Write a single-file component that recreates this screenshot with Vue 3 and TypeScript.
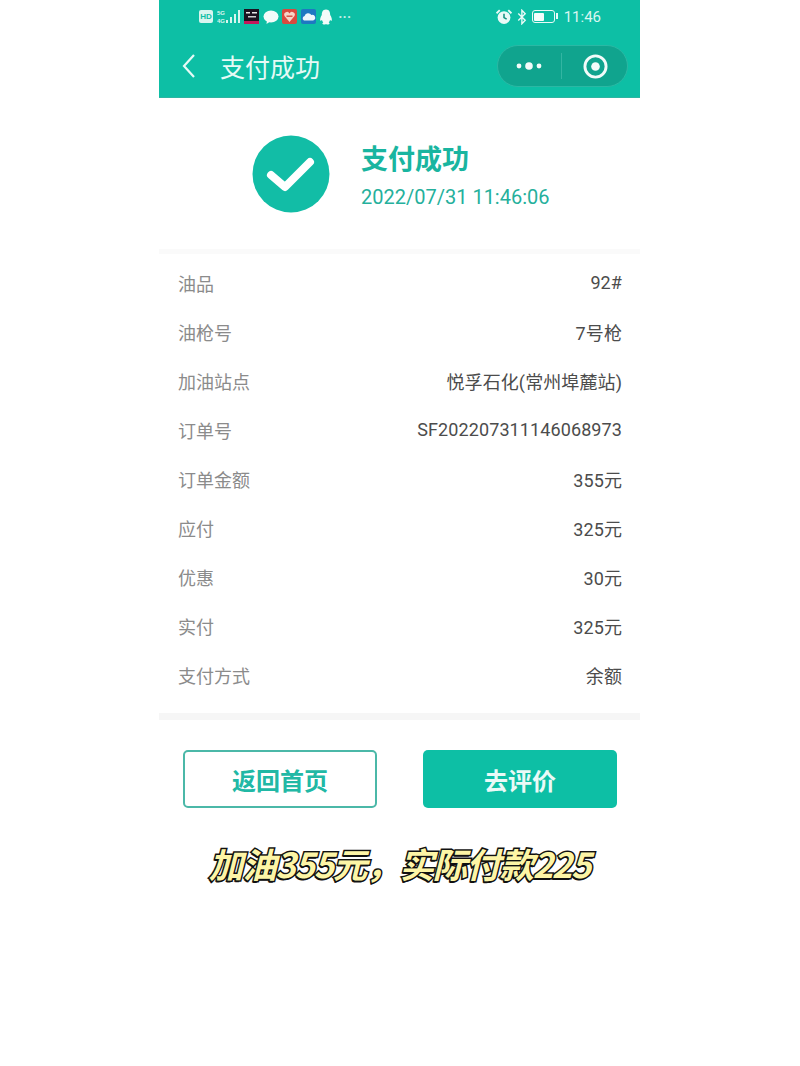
<script setup lang="ts">
interface Row {
  label: string;
  value: string;
}

const rows: Row[] = [
  { label: '油品', value: '92#' },
  { label: '油枪号', value: '7号枪' },
  { label: '加油站点', value: '悦孚石化(常州埠麓站)' },
  { label: '订单号', value: 'SF202207311146068973' },
  { label: '订单金额', value: '355元' },
  { label: '应付', value: '325元' },
  { label: '优惠', value: '30元' },
  { label: '实付', value: '325元' },
  { label: '支付方式', value: '余额' },
];
</script>

<template>
  <div class="page">
    <div class="phone">
      <header class="header">
        <div class="status">
          <div class="status-left">
            <span class="hd">HD</span>
            <svg class="signal" width="24" height="17" viewBox="0 0 24 17">
              <text x="0" y="7" class="net">5G</text>
              <text x="0" y="15" class="net">4G</text>
              <rect x="9" y="12" width="2" height="3" fill="#d8f5ef" />
              <rect x="13" y="9" width="2" height="6" fill="#d8f5ef" />
              <rect x="17" y="6" width="2" height="9" fill="#d8f5ef" />
              <rect x="21" y="2" width="2" height="13" fill="#d8f5ef" />
            </svg>
            <svg width="15" height="15" viewBox="0 0 15 15">
              <rect width="15" height="15" fill="#1b1320" />
              <rect x="2" y="3" width="4" height="1.5" fill="#e8e8e8" />
              <rect x="8" y="3" width="5" height="1.5" fill="#e8e8e8" />
              <rect x="4" y="7" width="8" height="1.5" fill="#cfcfcf" />
              <rect y="12" width="15" height="3" fill="#c2185b" />
            </svg>
            <svg width="16" height="14" viewBox="0 0 16 14">
              <ellipse cx="8" cy="6.5" rx="7.5" ry="6" fill="#f2fbf9" />
              <path d="M4 10 L3.5 14 L8 11 Z" fill="#f2fbf9" />
            </svg>
            <svg width="15" height="15" viewBox="0 0 15 15">
              <rect width="15" height="15" rx="2" fill="#d8493f" />
              <path d="M7.5 13 L2.5 7 A2.7 2.7 0 0 1 7.5 4.5 A2.7 2.7 0 0 1 12.5 7 Z" fill="#f6d5c8" />
              <rect x="4.5" y="6.5" width="6" height="1.4" fill="#d8493f" />
            </svg>
            <svg width="15" height="15" viewBox="0 0 15 15">
              <rect width="15" height="15" rx="2" fill="#1e78c2" />
              <path d="M3 11.5 A2.4 2.4 0 0 1 3.6 7 A3.8 3.8 0 0 1 10.4 6 A2.8 2.8 0 0 1 12.2 11.5 Z" fill="#eef7fc" />
            </svg>
            <svg class="qq" width="14" height="16" viewBox="0 0 14 16">
              <path d="M7 0.5 C3.5 0.5 2.8 3.5 2.8 6 C1.6 8 0.5 10.5 1.5 12 L3 11 C3.4 12.4 3.8 13 4.3 13.5 C3 14 3 15.5 5.5 15.5 C6.5 15.5 7 15 7 15 C7 15 7.5 15.5 8.5 15.5 C11 15.5 11 14 9.7 13.5 C10.2 13 10.6 12.4 11 11 L12.5 12 C13.5 10.5 12.4 8 11.2 6 C11.2 3.5 10.5 0.5 7 0.5 Z" fill="#f2fbf9" />
            </svg>
            <span class="more">···</span>
          </div>
          <div class="status-right">
            <svg width="16" height="16" viewBox="0 0 15 15">
              <circle cx="7.5" cy="8" r="6" fill="#eafaf7" />
              <path d="M7.5 4.5 V8 L10 9.5" fill="none" stroke="#0f8f7d" stroke-width="1.4" />
              <path d="M0.5 4 L3.5 1 M14.5 4 L11.5 1" stroke="#eafaf7" stroke-width="1.8" />
            </svg>
            <svg width="10" height="16" viewBox="0 0 9 15">
              <path d="M1 4.2 L7.5 10.5 L4.4 13.8 V1.2 L7.5 4.5 L1 10.8" fill="none" stroke="#eafaf7" stroke-width="1.3" />
            </svg>
            <span class="battery"><span class="battery-fill"></span></span>
            <span class="time">11:46</span>
          </div>
        </div>
        <div class="nav">
          <svg class="back" width="16" height="26" viewBox="0 0 16 26">
            <path d="M13 2 L3 13 L13 24" fill="none" stroke="#e6faf6" stroke-width="2.2" />
          </svg>
          <span class="nav-title">支付成功</span>
          <div class="capsule">
            <svg width="26" height="10" viewBox="0 0 26 10">
              <circle cx="3" cy="5" r="2.4" fill="#f2fbf9" />
              <circle cx="13" cy="5" r="3.8" fill="#f2fbf9" />
              <circle cx="23" cy="5" r="2.4" fill="#f2fbf9" />
            </svg>
            <span class="capsule-line"></span>
            <svg width="25" height="25" viewBox="0 0 26 26">
              <circle cx="13" cy="13" r="11" fill="none" stroke="#f2fbf9" stroke-width="3" />
              <circle cx="13" cy="13" r="4.5" fill="#f2fbf9" />
            </svg>
          </div>
        </div>
      </header>

      <section class="result">
        <svg width="78" height="78" viewBox="0 0 78 78">
          <circle cx="39" cy="39" r="38.5" fill="#12bda6" />
          <path d="M19 40 L33 52 L58 27" fill="none" stroke="#fff" stroke-width="8" stroke-linecap="round" stroke-linejoin="round" />
        </svg>
        <div class="result-text">
          <div class="result-title">支付成功</div>
          <div class="result-time">2022/07/31 11:46:06</div>
        </div>
      </section>

      <section class="detail">
        <div v-for="row in rows" :key="row.label" class="row">
          <span class="label">{{ row.label }}</span>
          <span class="value">{{ row.value }}</span>
        </div>
      </section>

      <div class="actions">
        <button class="btn btn-ghost">返回首页</button>
        <button class="btn btn-solid">去评价</button>
      </div>

      <p class="caption">加油355元，实际付款225</p>
    </div>
  </div>
</template>

<style scoped>
.page {
  width: 800px;
  height: 1066px;
  background: #fff;
  display: flex;
  justify-content: center;
  font-family: "Noto Sans CJK SC", "Roboto", sans-serif;
  overflow: hidden;
}

.phone {
  width: 481px;
  margin-right: 1px;
}

.header {
  height: 98px;
  background: #0dbfa5;
  border-bottom: 1px solid #2db5a2;
  box-sizing: border-box;
}

.status {
  height: 33px;
  display: flex;
  align-items: center;
  justify-content: space-between;
  padding: 0 39px 0 40px;
}

.status-left,
.status-right {
  display: flex;
  align-items: center;
  gap: 3.5px;
}

.status-right {
  gap: 5px;
}

.hd {
  width: 14px;
  height: 13px;
  border-radius: 2px;
  background: #d8f5ef;
  color: #0dbfa5;
  font: 700 8px/13px "Liberation Sans", sans-serif;
  text-align: center;
}

.net {
  font: 700 6px "Liberation Sans", sans-serif;
  fill: #d8f5ef;
}

.more {
  margin-left: 2px;
  font: 700 13px/16px "Liberation Sans", sans-serif;
  color: #bfeee5;
}

.battery {
  width: 23px;
  height: 13px;
  box-sizing: border-box;
  padding: 1.5px;
  border: 1.5px solid #eafaf7;
  border-radius: 3px;
  display: block;
  position: relative;
}

.battery::after {
  content: "";
  position: absolute;
  right: -4px;
  top: 2px;
  width: 2px;
  height: 6px;
  background: #eafaf7;
}

.battery-fill {
  display: block;
  width: 10px;
  height: 100%;
  background: #f4fdfb;
  border-radius: 1px;
}

.time {
  margin-left: 4px;
  font: 400 15px/16px "Roboto", sans-serif;
  color: #d9f6f1;
}

.nav {
  height: 65px;
  display: flex;
  align-items: center;
  padding: 0 12px 0 22px;
  box-sizing: border-box;
}

.back {
  margin-right: 23px;
}

.nav-title {
  flex: 1;
  font-size: 25px;
  line-height: 34px;
  color: #e6faf6;
}

.capsule {
  width: 131px;
  height: 42px;
  margin-top: 1px;
  box-sizing: border-box;
  padding: 0 18px;
  border-radius: 21px;
  background: #10a48e;
  border: 1px solid #2bb8a4;
  display: flex;
  align-items: center;
  gap: 19px;
}

.capsule-line {
  width: 1px;
  height: 26px;
  margin-right: 2px;
  background: #33b5a2;
}

.result {
  height: 156px;
  padding: 37px 0 0 93px;
  box-sizing: border-box;
  display: flex;
  align-items: flex-start;
  gap: 31px;
  border-bottom: 5px solid #fafafa;
}

.result-title {
  margin-top: 5px;
  font-size: 27px;
  line-height: 36px;
  font-weight: 700;
  color: #19b5a0;
}

.result-time {
  margin-top: 8px;
  font: 400 20px/26px "Roboto", sans-serif;
  color: #25b09c;
}

.detail {
  padding: 4px 18px 14px 19px;
  border-bottom: 7px solid #f6f6f6;
}

.row {
  height: 49px;
  display: flex;
  align-items: center;
  justify-content: space-between;
  font-size: 18px;
}

.label {
  color: #8b8b8b;
}

.value {
  font-family: "Roboto", "Noto Sans CJK SC", sans-serif;
  letter-spacing: 0.1px;
  color: #4c4c4c;
}

.actions {
  display: flex;
  justify-content: space-between;
  padding: 30px 23px 0 24px;
}

.btn {
  width: 194px;
  height: 58px;
  box-sizing: border-box;
  border-radius: 5px;
  font-family: inherit;
  font-size: 24px;
  font-weight: 700;
}

.btn-ghost {
  background: #fff;
  border: 2px solid #4bb8a8;
  color: #21b8a5;
}

.btn-solid {
  background: #0dbfa5;
  border: none;
  color: #eafaf7;
}

.caption {
  margin: 32px 0 0;
  text-align: center;
  font-size: 34.5px;
  line-height: 46px;
  font-weight: 700;
  font-style: italic;
  letter-spacing: -1.2px;
  color: #fdf5a6;
  -webkit-text-stroke: 3px #111;
  paint-order: stroke fill;
  text-shadow: -1px 2px 0 #111;
}
</style>
